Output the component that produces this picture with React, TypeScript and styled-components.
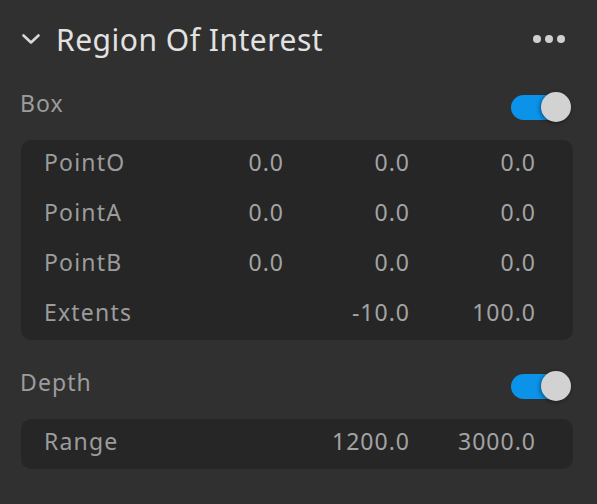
import { useState } from "react";
import styled, { createGlobalStyle } from "styled-components";

const GlobalStyle = createGlobalStyle`
  html, body {
    margin: 0;
    padding: 0;
    background: #303030;
  }
  body {
    font-family: "Noto Sans", "Open Sans", sans-serif;
  }
`;

const Wrapper = styled.div`
  width: 597px;
  height: 504px;
  box-sizing: border-box;
  padding: 18px 26px 0 20px;
  background-color: #303030;
`;

const Header = styled.div`
  display: flex;
  align-items: center;
  height: 42px;
  margin-bottom: 32px;
`;

const Chevron = styled.svg`
  width: 20px;
  height: 20px;
  margin-left: 1px;
  margin-right: 15px;
  color: #d8d8d8;
`;

const Title = styled.h2`
  flex: 1;
  margin: 0;
  font-size: 30px;
  font-weight: 400;
  color: #e2e2e2;
  letter-spacing: 0.5px;
`;

const Dots = styled.div`
  display: flex;
  gap: 4px;
  margin-right: 6px;
`;

const Dot = styled.span`
  width: 8px;
  height: 8px;
  border-radius: 50%;
  background: #cfcfcf;
`;

const Section = styled.div`
  & + & {
    margin-top: 31px;
  }
`;

const SectionHead = styled.div`
  display: flex;
  align-items: center;
  justify-content: space-between;
  height: 30px;
  margin-bottom: 18px;
`;

const SectionLabel = styled.span`
  font-size: 23px;
  letter-spacing: 1.1px;
  color: #9c9c9c;
  margin-top: -8px;
`;

const Toggle = styled.button<{ on: boolean }>`
  position: relative;
  width: 60px;
  height: 30px;
  padding: 0;
  border: none;
  background: transparent;
  cursor: pointer;
  &::before {
    content: "";
    position: absolute;
    left: 0;
    top: 3px;
    width: 56px;
    height: 25px;
    border-radius: 13px;
    background: ${(p) => (p.on ? "#0a93e8" : "#5a5a5a")};
  }
  &::after {
    content: "";
    position: absolute;
    top: 0;
    left: ${(p) => (p.on ? "30px" : "0")};
    width: 30px;
    height: 30px;
    border-radius: 50%;
    background: #d2d2d2;
    box-shadow: -1px 1px 4px rgba(0, 0, 0, 0.45);
  }
`;

const Panel = styled.div`
  margin-left: 1px;
  margin-right: -2px;
  border-radius: 10px;
  background: #262626;
  padding: 0 38px 0 23px;
`;

const Row = styled.div`
  display: grid;
  grid-template-columns: 1fr 126px 126px 126px;
  align-items: center;
  height: 50px;
`;

const RowLabel = styled.span`
  font-size: 23px;
  letter-spacing: 1.2px;
  color: #9c9c9c;
  margin-top: -6px;
`;

const Value = styled.span`
  font-size: 23px;
  letter-spacing: 1px;
  margin-right: -1px;
  color: #a3a3a3;
  text-align: right;
  margin-top: -6px;
`;

type RowData = { label: string; values: string[] };

const boxRows: RowData[] = [
  { label: "PointO", values: ["0.0", "0.0", "0.0"] },
  { label: "PointA", values: ["0.0", "0.0", "0.0"] },
  { label: "PointB", values: ["0.0", "0.0", "0.0"] },
  { label: "Extents", values: ["", "-10.0", "100.0"] },
];

const depthRows: RowData[] = [{ label: "Range", values: ["", "1200.0", "3000.0"] }];

function DataPanel({ rows }: { rows: RowData[] }) {
  return (
    <Panel>
      {rows.map((r) => (
        <Row key={r.label}>
          <RowLabel>{r.label}</RowLabel>
          {r.values.map((v, i) => (
            <Value key={i}>{v}</Value>
          ))}
        </Row>
      ))}
    </Panel>
  );
}

function App() {
  const [box, setBox] = useState(true);
  const [depth, setDepth] = useState(true);

  return (
    <Wrapper>
      <GlobalStyle />
      <Header>
        <Chevron viewBox="0 0 20 20" fill="none">
          <path d="M2.5 6.5 L10 13.5 L17.5 6.5" stroke="currentColor" strokeWidth="2.6" strokeLinecap="round" strokeLinejoin="round" />
        </Chevron>
        <Title>Region Of Interest</Title>
        <Dots>
          <Dot />
          <Dot />
          <Dot />
        </Dots>
      </Header>
      <Section>
        <SectionHead>
          <SectionLabel>Box</SectionLabel>
          <Toggle on={box} onClick={() => setBox(!box)} />
        </SectionHead>
        <DataPanel rows={boxRows} />
      </Section>
      <Section>
        <SectionHead>
          <SectionLabel>Depth</SectionLabel>
          <Toggle on={depth} onClick={() => setDepth(!depth)} />
        </SectionHead>
        <DataPanel rows={depthRows} />
      </Section>
    </Wrapper>
  );
}

export default App;
